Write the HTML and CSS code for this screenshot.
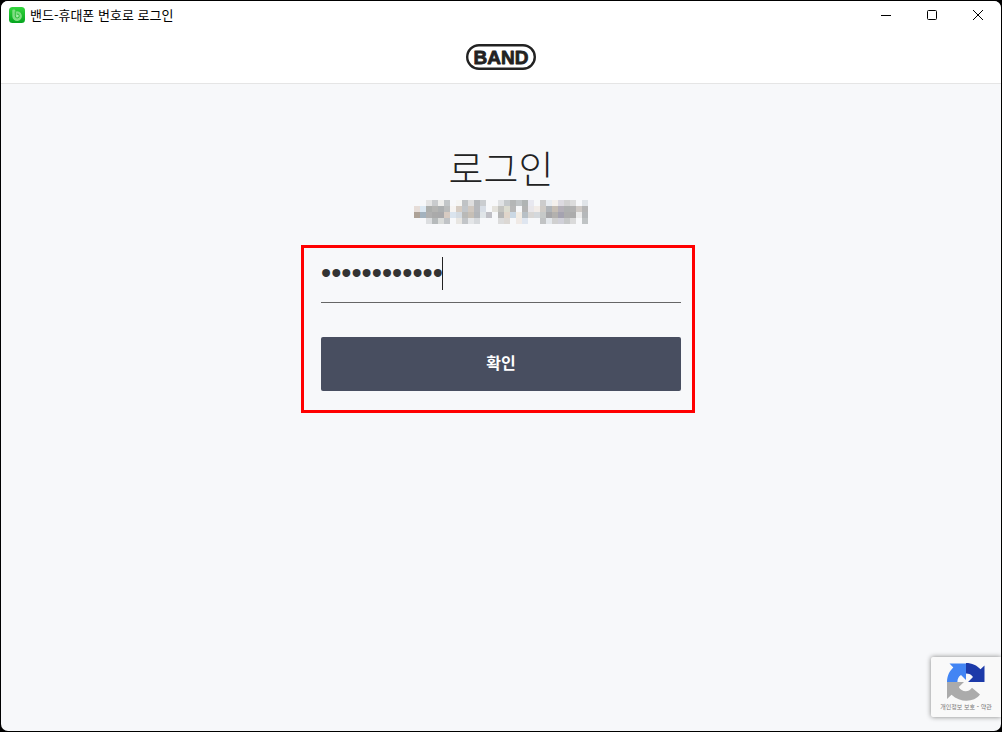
FILE: index.html
```html
<!DOCTYPE html>
<html lang="ko">
<head>
<meta charset="utf-8">
<meta name="viewport" content="width=device-width, initial-scale=1">
<title>밴드-휴대폰 번호로 로그인</title>
<link rel="stylesheet" href="styles.css">
</head>
<body>
<div class="window">
  <header class="titlebar">
    <svg class="app-icon" viewBox="0 0 16 16" aria-hidden="true">
      <defs><linearGradient id="green" x1="0" y1="0" x2="0" y2="1"><stop offset="0" stop-color="#32d53c"/><stop offset="1" stop-color="#06a51f"/></linearGradient></defs>
      <rect width="16" height="16" rx="3.5" fill="url(#green)"/>
      <path d="M3.300 3.500q0-1 1-1h1q1 0 1 1v1.200a4.800 4.800 0 1 1-3 4.500z" fill="#7fdd82"/>
      <path d="M6.300 4.500V9a2 2 0 1 0 1.600-2" fill="none" stroke="#2fbf3d"/>
      <path d="M7.500 7.500v2.800l2.400-1.400z" fill="#b4f0b2"/>
    </svg>
    <span class="caption">밴드-휴대폰 번호로 로그인</span>
    <div class="controls">
      <button class="control" type="button" aria-label="최소화"><svg viewBox="0 0 12 12"><path d="M1 6.5h10"/></svg></button>
      <button class="control" type="button" aria-label="최대화"><svg viewBox="0 0 12 12"><rect x="1.5" y="1.5" width="9" height="9" rx="1"/></svg></button>
      <button class="control" type="button" aria-label="닫기"><svg viewBox="0 0 12 12"><path d="M1 1l10 10M11 1L1 11"/></svg></button>
    </div>
  </header>
  <div class="brand">
    <a href="#" aria-label="BAND"><svg class="logo" viewBox="0 0 70 26"><rect x="1.2" y="1.2" width="67.6" height="23.6" rx="11.8"/><text x="35" y="19.6" text-anchor="middle">BAND</text></svg></a>
  </div>
  <main class="content">
    <h1 class="title">로그인</h1>
    <svg class="masked" viewBox="0 0 29 4" shape-rendering="crispEdges" role="img" aria-label="가려진 전화번호"></svg>
    <form class="form">
      <div class="field">
        <input class="password" type="password" value="abcdefghijkl" aria-label="비밀번호">
        <span class="caret"></span>
      </div>
      <button class="submit" type="button">확인</button>
      <div class="highlight"></div>
    </form>
  </main>
  <aside class="captcha">
    <svg class="captcha-logo" viewBox="0 0 38 38" aria-hidden="true">
      <path d="M19 0C25 0 30 2.400 33.500 6.300L37.500 2.500V19H21L26 14C24.500 11.500 22 10.400 19 10.400Z" fill="#1c3aa9"/>
      <path d="M0 19C0 13 2.400 8 6.300 4.500L2.500 0.500H19V17L14 12C11.500 13.500 10.400 16 10.400 19Z" fill="#4285f4"/>
      <path d="M0 19H17L11.800 24C14 28.500 21 30.500 25 24.800L33 31.500C27 39.500 13.500 40 4.500 31.700L0 36Z" fill="#ababab"/>
    </svg>
    <p class="captcha-links"><a href="#">개인정보 보호</a> <b>-</b> <a href="#">약관</a></p>
  </aside>
</div>
<script src="mosaic.js"></script>
</body>
</html>
```

FILE: styles.css
```css
* { box-sizing: border-box; }

body {
  margin: 0;
  background: #000;
  font-family: "Noto Sans CJK KR", sans-serif;
  color: #222;
}

.window {
  position: relative;
  display: flex;
  flex-direction: column;
  min-height: calc(100vh - 2px);
  margin: 1px;
  overflow: hidden;
  border-radius: 7px;
  background: #f7f8fa;
}

.titlebar {
  display: flex;
  align-items: center;
  height: 28px;
  padding-left: 8px;
  background: #fff;
}

.app-icon {
  width: 16px;
  height: 16px;
  margin-right: 5px;
}

.caption {
  font-size: 13px;
  line-height: 28px;
  color: #000;
}

.controls {
  display: flex;
  margin-left: auto;
}

.control {
  display: grid;
  place-items: center;
  width: 46px;
  height: 28px;
  padding: 0;
  border: 0;
  background: none;
}

.control svg {
  width: 12px;
  height: 12px;
  fill: none;
  stroke: #000;
}

.brand {
  display: flex;
  justify-content: center;
  padding: 15px 0 13px;
  border-bottom: 1px solid #e5e5e5;
  background: #fff;
}

.brand a {
  display: block;
  height: 26px;
}

.logo {
  display: block;
  width: 70px;
  height: 26px;
}

.logo rect {
  fill: none;
  stroke: #222;
  stroke-width: 2.4;
}

.logo text {
  fill: #222;
  stroke: #222;
  stroke-width: 0.8;
  stroke-linejoin: round;
  font: 700 19px "Liberation Sans", sans-serif;
}

.content {
  display: flex;
  flex: 1;
  flex-direction: column;
  align-items: center;
  padding: 60px 20px;
}

.title {
  margin: 0;
  font-size: 38px;
  font-weight: 300;
  line-height: 46px;
}

.masked {
  display: block;
  width: 174px;
  height: 24px;
  margin: 10px 0 30px;
}

.form {
  position: relative;
  width: 100%;
  max-width: 360px;
}

.field {
  position: relative;
  margin-bottom: 34px;
}

.password {
  display: block;
  width: 100%;
  height: 49px;
  padding: 0 0 10px;
  border: 0;
  border-bottom: 1px solid #666;
  border-radius: 0;
  outline: 0;
  background: transparent;
  color: #333;
  font-family: "Liberation Sans", sans-serif;
  font-size: 29px;
}

.caret {
  position: absolute;
  top: 3px;
  left: 121px;
  width: 1px;
  height: 33px;
  background: #222;
}

.submit {
  display: block;
  width: 100%;
  height: 54px;
  padding: 0 0 4px;
  border: 0;
  border-radius: 2px;
  background: #484e60;
  color: #fff;
  font-family: inherit;
  font-size: 16px;
  font-weight: 700;
}

.highlight {
  position: absolute;
  inset: -9px -14px -22px -20px;
  border: 3px solid #f00;
  pointer-events: none;
}

.captcha {
  position: absolute;
  right: 0;
  bottom: 14px;
  width: 70px;
  height: 60px;
  padding-top: 6px;
  border-radius: 2px 0 0 2px;
  background: #f9f9f9;
  box-shadow: 0 0 5px #808080;
}

.captcha-logo {
  display: block;
  width: 38px;
  height: 38px;
  margin: 0 auto;
}

.captcha-links {
  margin: 1px 0 0;
  color: #777;
  font-size: 6px;
  line-height: 10px;
  text-align: center;
  white-space: nowrap;
}

.captcha-links a {
  color: inherit;
  text-decoration: none;
}
```

FILE: mosaic.js
```js
const rows = [
  "- - e4e4e4 c9cbcd eeeeec c2c6c8 - f5f5f3 c0c3c5 dedede b5b8bb cacdd0 - - e0e2e4 c5c9cb b4b6b6 c0c4c6 b0b4b4 e8e8f0 - cccccc e8ecf0 f4f0ec dcdae0 d2d2d2 dcdcdc - e0e4e8",
  "e6ddd8 dce8f2 acaeac b4b4b2 acafb0 babcbc f6f4f2 d6ccc2 c2c6ca d0c8c0 b6b8bc d8dee6 - e4e2dc c4c4c0 dcdcd0 b8b8b8 - b4b4b4 e8e6ea f2ece8 cfcbc6 b0b4b8 c6beb4 b4b0b8 aeb0b0 b2b2b2 cfcac6 b6b6b6",
  "ada297 a3b2be b0b0b0 aaaaaa a9a9ab d7cbc2 dae4ee d4dbe2 b9b9b7 c6bfb6 b2b5b9 e0e5e8 c0c0c6 - b6b6b6 e0d5ca cbd8e4 f2ece4 b8c0c6 d8d6d4 d4d8dc c6c9c8 a6a6a8 b3b1ae a5a3b0 adadad acacac ececec b5b8ba",
  "- - dcdee0 b6babb dadcda c0c3c6 - e8e6e2 c2c5c8 e4e6e8 d6d9dc - - - dcdcdc dcd8d4 - f0eae6 dfe6f0 - - c1c3c4 e4e8ec d0d0d0 d0d0d8 c6c8c8 dadada - bfc3c4"
];

const masked = document.querySelector(".masked");

rows.forEach((row, y) => {
  row.split(" ").forEach((color, x) => {
    if (color === "-") return;
    const cell = document.createElementNS("http://www.w3.org/2000/svg", "rect");
    cell.setAttribute("x", x);
    cell.setAttribute("y", y);
    cell.setAttribute("width", 1);
    cell.setAttribute("height", 1);
    cell.setAttribute("fill", "#" + color);
    masked.append(cell);
  });
});
```
